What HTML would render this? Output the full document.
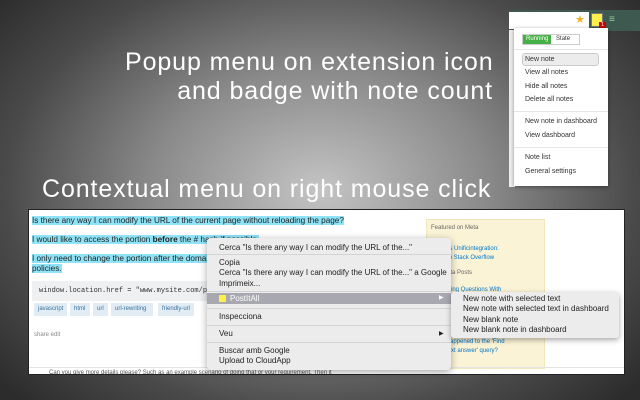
<!DOCTYPE html>
<html><head><style>
*{margin:0;padding:0;box-sizing:border-box}
body{width:640px;height:400px;overflow:hidden;position:relative;font-family:"Liberation Sans",sans-serif;
background:radial-gradient(ellipse 420px 300px at 320px 190px,#c4c4c4 0%,#8a8a8a 40%,#4a4a4a 75%,#2c2c2c 100%);}
.t{position:absolute;color:#fff;font-size:25px;white-space:nowrap;letter-spacing:0.9px}
.abs{position:absolute}
.pm div{position:absolute;left:15px;font-size:7px;color:#333}
.sc{position:absolute;left:28px;top:209px;width:597px;height:166px;background:#fff;overflow:hidden;border:1px solid #222}
.sc .hl{background:#8fe3f7}
.cm{position:absolute;left:207px;top:238px;width:244px;height:132px;background:#ececec;border-radius:4px;box-shadow:0 2px 8px rgba(0,0,0,.35);font-size:8px;color:#222}
.cm div{position:absolute;left:12px}
.sep{height:1px;background:#d4d4d4;left:0!important;width:244px}
.sub{position:absolute;left:451px;top:292px;width:168px;height:46px;background:#ececec;border-radius:3px;box-shadow:0 2px 6px rgba(0,0,0,.35);font-size:8px;color:#222}
.sub div{position:absolute;left:12px}
.tag{position:absolute;top:303px;height:13px;background:#e1ecf4;color:#39739d;font-size:6px;line-height:13px;padding:0 4px}
</style></head><body>
<div class="t" style="left:125px;top:48px">Popup menu on extension icon</div>
<div class="t" style="right:147px;top:77px">and badge with note count</div>
<div class="t" style="left:42px;top:175px">Contextual menu on right mouse click</div>

<!-- toolbar -->
<div class="abs" style="left:509px;top:10px;width:131px;height:21px;background:#3e5a50"></div>
<div class="abs" style="left:509px;top:12px;width:80px;height:17px;background:#fff"></div>
<div class="abs" style="left:575px;top:13px;color:#f0b020;font-size:11px">★</div>
<div class="abs" style="left:591px;top:13px;width:12px;height:14px;background:#ffef4a;border:1px solid #777"></div>
<div class="abs" style="left:599px;top:22px;width:7px;height:7px;background:#c00;color:#fff;font-size:5px;text-align:center;line-height:7px">1</div>
<div class="abs" style="left:609px;top:14px;color:#9c9;font-size:10px">≡</div>
<div class="abs" style="left:509px;top:30px;width:6px;height:157px;background:#eee"></div>
<!-- popup -->
<div class="abs pm" style="left:514px;top:28px;width:94px;height:158px;background:#fff;box-shadow:0 1px 4px rgba(0,0,0,.4)">
 <div style="left:8px;top:6px;width:58px;height:11px;border:1px solid #ccc;font-size:6px;line-height:9px;color:#333"><span style="background:#45b045;color:#fff;padding:0 3px;display:inline-block;height:9px">Running</span> <span style="margin-left:3px">State</span></div>
 <div style="left:0;top:21px;width:94px;height:1px;background:#e6e6e6"></div>
 <div style="left:8px;top:25px;width:77px;height:13px;background:#ececec;border:1px solid #ccc;border-radius:3px"></div>
 <div style="left:11px;top:28px">New note</div>
 <div style="left:11px;top:41px">View all notes</div>
 <div style="left:11px;top:55px">Hide all notes</div>
 <div style="left:11px;top:68px">Delete all notes</div>
 <div style="left:0;top:83px;width:94px;height:1px;background:#e6e6e6"></div>
 <div style="left:11px;top:90px">New note in dashboard</div>
 <div style="left:11px;top:104px">View dashboard</div>
 <div style="left:0;top:119px;width:94px;height:1px;background:#e6e6e6"></div>
 <div style="left:11px;top:126px">Note list</div>
 <div style="left:11px;top:140px">General settings</div>
</div>

<!-- screenshot -->
<div class="sc">
 <div class="abs" style="left:3px;top:6px;font-size:8.2px;color:#222"><span class="hl">Is there any way I can modify the URL of the current page without reloading the page?</span></div>
 <div class="abs" style="left:3px;top:25px;font-size:8.2px;color:#222"><span class="hl">I would like to access the portion <b>before</b> the # hash if possible.</span></div>
 <div class="abs" style="left:3px;top:44px;font-size:8.2px;color:#222;line-height:10px"><span class="hl">I only need to change the portion after the domain, so it's not like I'm violating cross-domain</span><br><span class="hl">policies.</span></div>
 <div class="abs" style="left:3px;top:71px;width:220px;height:20px;background:#eff0f1;font-family:'Liberation Mono',monospace;font-size:7px;line-height:20px;padding-left:7px;color:#333">window.location.href = "www.mysite.com/page2.php";</div>
 <div class="abs" style="left:397px;top:9px;width:119px;height:150px;background:#fbf3d5;border:1px solid #f1e7bc"></div>
 <div class="abs" style="left:402px;top:15px;font-size:6px;color:#666">Featured on Meta</div>
 <div class="abs" style="left:402px;top:35px;font-size:6px;color:#07c;line-height:9px">Careers Unificintegration:<br>Jobs on Stack Overflow</div>
 <div class="abs" style="left:402px;top:60px;font-size:6px;color:#666">Hot Meta Posts</div>
 <div class="abs" style="left:402px;top:77px;font-size:6px;color:#07c">Answering Questions With</div>
 <div class="abs" style="left:402px;top:128px;font-size:6px;color:#07c;line-height:9px">What happened to the 'Find<br>your next answer' query?</div>
 <div class="abs" style="left:5px;top:122px;font-size:6px;color:#888">share edit</div>
 <div class="abs" style="left:0;top:157px;width:597px;height:1px;background:#e4e4e4"></div>
 <div class="abs" style="left:20px;top:160px;font-size:6px;color:#555">Can you give more details please? Such as an example scenario of doing that or your requirement. Then it</div>
</div>
<div class="tag" style="left:34px;width:33px">javascript</div>
<div class="tag" style="left:70px;width:20px">html</div>
<div class="tag" style="left:93px;width:15px">url</div>
<div class="tag" style="left:111px;width:42px">url-rewriting</div>
<div class="tag" style="left:158px;width:36px">friendly-url</div>

<!-- context menu -->
<div class="cm">
 <div style="top:5px">Cerca "Is there any way I can modify the URL of the..."</div>
 <div class="sep" style="top:16px"></div>
 <div style="top:20px">Copia</div>
 <div style="top:30px">Cerca "Is there any way I can modify the URL of the..." a Google</div>
 <div style="top:41px">Imprimeix...</div>
 <div class="sep" style="top:53px"></div>
 <div style="left:0;top:55px;width:244px;height:11px;background:#a8a8b0"></div>
 <div style="left:12px;top:57px;width:7px;height:7px;background:#ffef4a"></div>
 <div style="left:23px;top:56px;color:#fff">PostItAll</div>
 <div style="left:232px;top:56px;color:#fff;font-size:6px">▶</div>
 <div class="sep" style="top:70px"></div>
 <div style="top:74px">Inspecciona</div>
 <div class="sep" style="top:87px"></div>
 <div style="top:91px">Veu</div>
 <div style="left:232px;top:92px;font-size:6px">▶</div>
 <div class="sep" style="top:104px"></div>
 <div style="top:108px">Buscar amb Google</div>
 <div style="top:118px">Upload to CloudApp</div>
</div>
<div class="sub">
 <div style="top:2px">New note with selected text</div>
 <div style="top:12px">New note with selected text in dashboard</div>
 <div style="top:23px">New blank note</div>
 <div style="top:33px">New blank note in dashboard</div>
</div>
</body></html>
